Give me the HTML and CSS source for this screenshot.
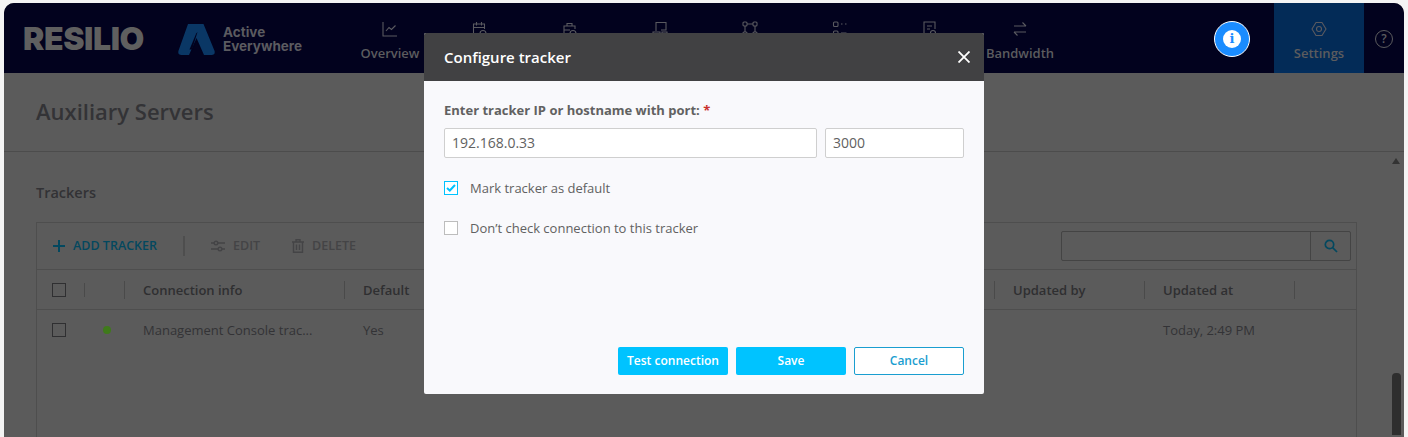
FILE: index.html
```html
<!DOCTYPE html>
<html lang="en">
<head>
<meta charset="utf-8">
<title>Configure tracker</title>
<link rel="stylesheet" href="styles.css">
</head>
<body>
<div class="app">
  <header class="topbar">
    <div class="brand">
      <span class="wordmark">RESILIO</span>
      <svg class="mark" viewBox="0 0 37 31" width="37" height="31"><path fill="#0a3765" d="M10 0H25.5L36.6 27Q37.4 31 33.5 31H26L18.5 14L11 31H3.5Q-.4 31 .4 27Z"/><path fill="#02021e" d="M19.5 8L14 25.5H11.5L18.2 9.5Z"/><path fill="#02021e" d="M18.5 17L24 29H13.5Z"/></svg>
      <span class="product">Active<br>Everywhere</span>
    </div>
    <nav class="nav">
      <a class="nav-item"><svg class="ico" viewBox="0 0 16 16"><path d="M1 1V15H15M4 10L7 6.5 9.5 8.500 13.500 4.500"/></svg><span class="nav-label">Overview</span></a>
      <a class="nav-item"><svg class="ico" viewBox="0 0 16 16"><path d="M1.500 13.500V3H12.500V8M1.500 6.500H12.500M4.500 1V4.500M9.500 1V4.500M1.500 13.500H7"/><circle cx="11" cy="12.500" r="3"/></svg></a>
      <a class="nav-item"><svg class="ico" viewBox="0 0 16 16"><path d="M2 14V5H13V8M2 9H8M5 5V2.500H10V5M2 14H7"/><circle cx="11" cy="12.500" r="3"/></svg></a>
      <a class="nav-item"><svg class="ico" viewBox="0 0 16 16"><path d="M4 10V1.500H14V9H9M1 11H8V15H1Z"/><path d="M10 11H15V15H10Z"/></svg></a>
      <a class="nav-item"><svg class="ico" viewBox="0 0 16 16"><rect x="1" y="1" width="4" height="4" rx="1"/><rect x="11" y="1" width="4" height="4" rx="1"/><rect x="1" y="11" width="4" height="4" rx="1"/><rect x="11" y="11" width="4" height="4" rx="1"/><path d="M5 3H11M3 5V11M13 5V11M5 13H11"/></svg></a>
      <a class="nav-item"><svg class="ico" viewBox="0 0 16 16"><rect x="1.500" y="1" width="4.500" height="4.500" rx="1"/><rect x="1.500" y="10" width="4.500" height="4.500" rx="1"/><path d="M9 3H10.500M13 3H14.500M9 12H14.500"/></svg></a>
      <a class="nav-item"><svg class="ico" viewBox="0 0 16 16"><path d="M2 15V1H13V8M5 5H10M5 8H8M2 15H7"/><circle cx="11" cy="12" r="2.500"/></svg></a>
      <a class="nav-item"><svg class="ico" viewBox="0 0 16 16"><path d="M2 5H14M10.500 1.500L14 5M14 11H2M5.500 14.500L2 11"/></svg><span class="nav-label">Bandwidth</span></a>
    </nav>
    <div class="top-right">
      <span class="info-badge"><span class="info-dot">i</span></span>
      <a class="nav-item nav-active"><svg class="ico" viewBox="0 0 16 16"><path d="M5 1.500H11L15 8 11 14.500H5L1 8Z" stroke-linejoin="round"/><circle cx="8" cy="8" r="2.500"/></svg><span class="nav-label">Settings</span></a>
      <span class="help">?</span>
    </div>
  </header>

  <div class="page-head"><h1 class="page-title">Auxiliary Servers</h1></div>

  <div class="content">
    <main class="main">
      <h2 class="section-title">Trackers</h2>
      <section class="panel">
        <div class="toolbar">
          <button class="tool tool-primary"><svg class="tool-ico" viewBox="0 0 12 12"><path d="M6 0V12M0 6H12"/></svg>ADD TRACKER</button>
          <span class="tool-sep"></span>
          <button class="tool"><svg class="tool-ico wide" viewBox="0 0 14 12"><path d="M0 3H14M0 9H14"/><circle cx="5" cy="3" r="1.800" class="knob"/><circle cx="9" cy="9" r="1.800" class="knob"/></svg>EDIT</button>
          <button class="tool tool-delete"><svg class="tool-ico" viewBox="0 0 12 14"><path d="M0 3H12M4 3V.8H8V3M1.500 3V13.200H10.500V3M4.500 5.500V11M7.500 5.500V11"/></svg>DELETE</button>
          <div class="search">
            <span class="search-field"></span>
            <span class="search-btn"><svg viewBox="0 0 14 14" width="14" height="14"><circle cx="5.500" cy="5.500" r="4.200"/><path d="M8.500 8.500L13 13"/></svg></span>
          </div>
        </div>
        <div class="row row-head">
          <div class="cell c-check sep"><span class="box"></span></div>
          <div class="cell c-status sep"></div>
          <div class="cell c-conn sep">Connection info</div>
          <div class="cell c-default sep">Default</div>
          <div class="cell c-by sep">Updated by</div>
          <div class="cell c-at sep">Updated at</div>
        </div>
        <div class="row row-body">
          <div class="cell c-check"><span class="box"></span></div>
          <div class="cell c-status"><span class="dot"></span></div>
          <div class="cell c-conn">Management Console trac...</div>
          <div class="cell c-default">Yes</div>
          <div class="cell c-by"></div>
          <div class="cell c-at">Today, 2:49 PM</div>
        </div>
      </section>
    </main>
    <aside class="scrollbar">
      <span class="arrow"></span>
      <span class="thumb"></span>
    </aside>
  </div>

  <div class="modal">
    <div class="modal-head">
      <span class="modal-title">Configure tracker</span>
      <svg class="close" viewBox="0 0 12 12" width="12" height="12"><path d="M.5 .5L11.500 11.500M11.500 .5L.5 11.500"/></svg>
    </div>
    <div class="modal-body">
      <label class="field-label">Enter tracker IP or hostname with port: <span class="req">*</span></label>
      <div class="inputs">
        <div class="input input-host">192.168.0.33</div>
        <div class="input input-port">3000</div>
      </div>
      <div class="check-row"><span class="check checked"><svg viewBox="0 0 10 8" width="10" height="8"><path d="M1 4L3.800 6.500 9 1"/></svg></span>Mark tracker as default</div>
      <div class="check-row second"><span class="check"></span>Don’t check connection to this tracker</div>
      <div class="actions">
        <button class="btn btn-fill">Test connection</button>
        <button class="btn btn-fill">Save</button>
        <button class="btn btn-line">Cancel</button>
      </div>
    </div>
  </div>
</div>
</body>
</html>
```
FILE: styles.css
```css
* { box-sizing: border-box; }
html, body { margin: 0; height: 100%; overflow: hidden; }
body { background: #f4f4f4; font-family: "Open Sans", sans-serif; }

.app {
  position: relative;
  margin: 3px 4px 0;
  height: 434px;
  background: #5b5b5b;
  border-radius: 10px 10px 0 0;
  overflow: hidden;
  color: #323235;
}

/* top bar */
.topbar { display: flex; height: 70px; background: #02021e; }
.brand { display: flex; align-items: center; width: 341px; padding-left: 19px; flex: none; }
.wordmark {
  width: 155px;
  font-family: Inter, sans-serif;
  font-weight: 900;
  font-size: 32px;
  letter-spacing: -.4px;
  color: #5f5f5f;
}
.mark { flex: none; margin: 2px 8px 0 0; }
.product {
  font-family: Inter, sans-serif;
  font-weight: 700;
  font-size: 13.500px;
  line-height: 14px;
  color: #5b5b60;
  margin-top: 1px;
}
.nav { display: flex; }
.nav-item {
  width: 90px;
  display: flex;
  flex-direction: column;
  align-items: center;
  padding-top: 18px;
  gap: 7px;
  flex: none;
}
.ico { width: 16px; height: 16px; fill: none; stroke: #5a5a60; stroke-width: 1.100; }
.nav-label { font-size: 13px; font-weight: 600; line-height: 18px; color: #5c5c5e; }
.top-right { display: flex; align-items: flex-start; margin-left: auto; }
.info-badge {
  width: 36px; height: 36px; margin: 18px 24px 0 0;
  border-radius: 50%;
  background: #1a8cff;
  border: 1px solid #fff;
  display: flex; align-items: center; justify-content: center;
}
.info-dot {
  width: 18px; height: 18px; border-radius: 50%;
  background: #fff; color: #1a8cff;
  font: 700 13px/18px "DejaVu Serif", serif;
  text-align: center;
}
.nav-active { background: #032b57; height: 70px; border-bottom: 3px solid #032e5d; }
.help {
  width: 18px; height: 18px; margin: 27px 11px 0;
  border: 1.500px solid #5c5c5e; border-radius: 50%;
  color: #5c5c5e;
  font-size: 12px; font-weight: 600; line-height: 15px; text-align: center;
}

/* page */
.page-head { height: 79px; border-bottom: 1px solid #4c4c4c; padding: 23px 0 0 32px; }
.page-title { margin: 0; font-size: 22px; font-weight: 600; line-height: 30px; color: #333336; }
.content { display: flex; }
.main { flex: 1; padding: 30px 0 0 32px; min-width: 0; }
.section-title { margin: 0 0 19px; font-size: 14.500px; font-weight: 600; line-height: 21px; color: #323235; }
.panel { width: 1321px; height: 300px; border: 1px solid #4e4e4e; }
.toolbar { display: flex; align-items: center; height: 47px; padding: 0 5px 0 16px; border-bottom: 1px solid #4e4e4e; }
.tool {
  display: flex; align-items: center; gap: 8px;
  border: 0; padding: 0; background: none;
  font: 600 12.500px/18px "Open Sans", sans-serif;
  color: #444446;
}
.tool-primary { color: #03485f; }
.tool-ico { width: 12px; height: 14px; fill: none; stroke: currentColor; stroke-width: 1.400; }
.tool-primary .tool-ico { stroke-width: 2; }
.tool-ico.wide { width: 14px; }
.knob { fill: #5b5b5b; }
.tool-sep { width: 2px; height: 20px; background: #4e4e4e; margin: 0 26px; }
.tool-delete { margin-left: 32px; }
.search { display: flex; height: 30px; width: 290px; margin-left: auto; border: 1px solid #444; border-radius: 2px; }
.search-field { flex: 1; }
.search-btn { width: 40px; border-left: 1px solid #444; display: flex; align-items: center; justify-content: center; }
.search-btn svg { fill: none; stroke: #03485f; stroke-width: 1.700; }
.row { display: flex; align-items: center; }
.row-head { height: 40px; border-bottom: 1px solid #4e4e4e; font-size: 13px; font-weight: 600; color: #2f2f31; }
.row-body { height: 40px; font-size: 13px; color: #333336; padding-bottom: 0; }
.cell { position: relative; padding-left: 18px; flex: none; line-height: 18px; }
.sep::after { content: ""; position: absolute; right: 0; top: 0; bottom: 0; width: 1px; background: #4a4a4a; }
.c-check { width: 48px; padding-left: 15px; display: flex; }
.c-status { width: 40px; height: 18px; padding: 0; display: flex; align-items: center; justify-content: center; }
.c-conn { width: 220px; }
.c-default { width: 650px; }
.c-by { width: 150px; }
.c-at { width: 150px; }
.box { width: 14px; height: 14px; border: 1px solid #2f2f31; }
.dot { width: 8px; height: 8px; border-radius: 50%; background: #3f7a1b; margin-left: 4px; }

.scrollbar { position: relative; width: 16px; margin-right: 0; flex: none; display: flex; flex-direction: column; align-items: center; padding-top: 6px; height: 283px; }
.arrow { width: 0; height: 0; border: 4.500px solid transparent; border-top: 0; border-bottom: 6px solid #333; }
.thumb { width: 9px; margin-top: auto; height: 62px; background: #2e2e2e; border-radius: 4px 4px 0 0; }

/* modal */
.modal {
  position: absolute; left: 420px; top: 30px;
  width: 560px; height: 361px;
  background: #f9f9fc;
  border-radius: 2px;
  display: flex; flex-direction: column;
}
.modal-head {
  height: 48px; flex: none;
  background: #414143;
  border-radius: 2px 2px 0 0;
  display: flex; align-items: center; justify-content: space-between;
  padding: 0 14px 0 20px;
}
.modal-title { color: #fff; font-size: 15px; font-weight: 600; }
.close { fill: none; stroke: #fff; stroke-width: 1.800; margin-right: 0; }
.modal-body { flex: 1; display: flex; flex-direction: column; padding: 20px 20px 19px; color: #616161; font-size: 13px; }
.field-label { font-weight: 700; line-height: 18px; font-size: 13px; }
.req { color: #c9302c; }
.inputs { display: flex; gap: 8px; margin-top: 9px; }
.input {
  height: 30px; padding: 0 7px;
  background: #fff; border: 1px solid #cfcfcf; border-radius: 2px;
  font-size: 14px; line-height: 28px; color: #616161;
}
.input-host { width: 373px; }
.input-port { width: 139px; }
.check-row { display: flex; align-items: center; gap: 12px; margin-top: 21px; line-height: 18px; }
.check-row.second { margin-top: 22px; }
.check { width: 14px; height: 14px; background: #fff; border: 1px solid #bdbdbd; display: flex; align-items: center; justify-content: center; flex: none; }
.check.checked { border-color: #00c3ff; }
.check svg { fill: none; stroke: #00c3ff; stroke-width: 2; }
.actions { display: flex; justify-content: flex-end; gap: 8px; margin-top: auto; }
.btn {
  width: 110px; height: 28px; padding: 0;
  border-radius: 2px;
  font: 600 12px/16px "Open Sans", sans-serif;
}
.btn-fill { background: #00c3ff; border: 0; color: #fff; }
.btn-line { background: #fff; border: 1px solid #1a9ed0; color: #1a9ed0; }
```
